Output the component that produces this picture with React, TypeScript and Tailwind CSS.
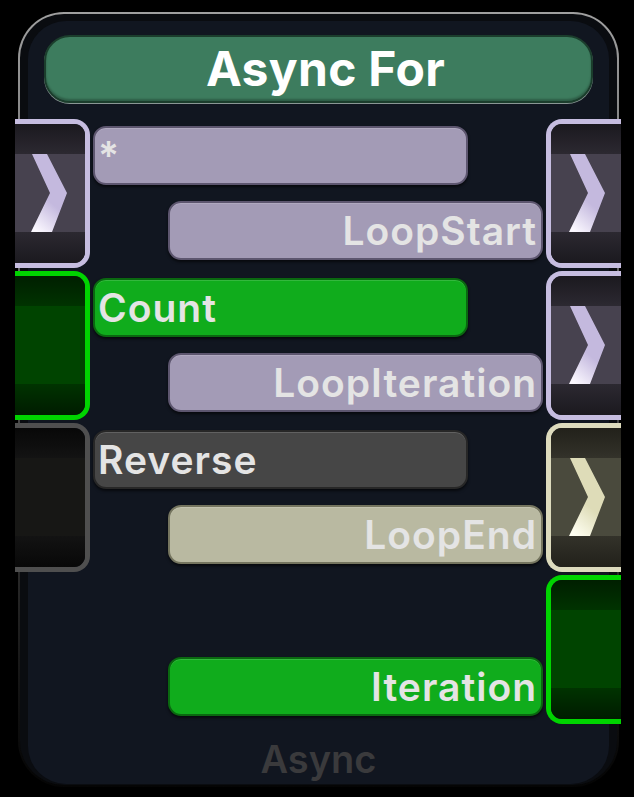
import React from "react";

type Tone = "lav" | "green" | "gray" | "beige";

const pinTone: Record<Tone, { border: string; top: string; mid: string; bottom: string }> = {
  lav: {
    border: "border-[#c6bde0]",
    top: "bg-gradient-to-b from-[#1b191f] to-[#2c2931]",
    mid: "bg-[#47424f]",
    bottom: "bg-gradient-to-b from-[#2c2931] to-[#1b191f]",
  },
  green: {
    border: "border-[#00d400]",
    top: "bg-gradient-to-b from-[#001f00] to-[#003300]",
    mid: "bg-[#004400]",
    bottom: "bg-gradient-to-b from-[#003300] to-[#001c00]",
  },
  gray: {
    border: "border-[#4f4f4f]",
    top: "bg-gradient-to-b from-[#080808] to-[#131313]",
    mid: "bg-[#171715]",
    bottom: "bg-gradient-to-b from-[#131313] to-[#080808]",
  },
  beige: {
    border: "border-[#dddbbd]",
    top: "bg-gradient-to-b from-[#22211a] to-[#33322a]",
    mid: "bg-[#4a4a3d]",
    bottom: "bg-gradient-to-b from-[#33322a] to-[#22211a]",
  },
};

const fieldTone: Record<Tone, string> = {
  lav: "bg-[#a39bb6] border-[#5d566f]",
  green: "bg-[#10ac1c] border-[#0a6810]",
  gray: "bg-[#464646] border-[#272727]",
  beige: "bg-[#b9b9a1] border-[#75755f]",
};

const Chevron = ({ tone }: { tone: "lav" | "beige" }) => {
  const id = `chev-${tone}`;
  const from = tone === "lav" ? "#c4b9de" : "#dedcb8";
  const to = tone === "lav" ? "#fbf8ff" : "#fffff2";
  return (
    <svg width="37" height="78" viewBox="0 0 37 78">
      <defs>
        <linearGradient id={id} x1="0.6" y1="0" x2="0.2" y2="1">
          <stop offset="0" stopColor={from} />
          <stop offset="0.55" stopColor={from} />
          <stop offset="1" stopColor={to} />
        </linearGradient>
      </defs>
      <polygon points="1,0 16,0 36,39 21,78 0,78 19,39" fill={`url(#${id})`} />
    </svg>
  );
};

const Pin = ({ tone, side, exec }: { tone: Tone; side: "left" | "right"; exec?: boolean }) => {
  const t = pinTone[tone];
  return (
    <div
      className={`w-[75px] h-[149px] shrink-0 border-[5px] overflow-hidden flex flex-col ${t.border} ${
        side === "left" ? "border-l-0 rounded-r-[16px]" : "border-r-0 rounded-l-[16px]"
      }`}
    >
      <div className={`h-[30px] ${t.top}`} />
      <div className={`h-[78px] flex items-center ${t.mid} ${side === "left" ? "pl-[16px]" : "pl-[18px]"}`}>
        {exec && <Chevron tone={tone === "beige" ? "beige" : "lav"} />}
      </div>
      <div className={`flex-1 ${t.bottom}`} />
    </div>
  );
};

const Field = ({ label, tone, align }: { label: string; tone: Tone; align: "left" | "right" }) => (
  <div
    className={`h-[59px] w-[375px] rounded-[13px] border-2 flex items-center shadow-[0_2px_3px_rgba(0,0,0,0.6),inset_0_1px_0_rgba(255,255,255,0.15)] ${fieldTone[tone]} ${
      align === "left" ? "justify-start pl-[3px]" : "justify-end pr-[4px]"
    }`}
  >
    <span className="text-[39px] leading-none font-semibold text-[#e4e4e4] tracking-[1px] whitespace-nowrap">
      {label}
    </span>
  </div>
);

type Row = {
  left?: { tone: Tone; exec?: boolean };
  input?: { label: string; tone: Tone };
  output: { label: string; tone: Tone };
  right: { tone: Tone; exec?: boolean };
};

const rows: Row[] = [
  { left: { tone: "lav", exec: true }, input: { label: "*", tone: "lav" }, output: { label: "LoopStart", tone: "lav" }, right: { tone: "lav", exec: true } },
  { left: { tone: "green" }, input: { label: "Count", tone: "green" }, output: { label: "LoopIteration", tone: "lav" }, right: { tone: "lav", exec: true } },
  { left: { tone: "gray" }, input: { label: "Reverse", tone: "gray" }, output: { label: "LoopEnd", tone: "beige" }, right: { tone: "beige", exec: true } },
  { output: { label: "Iteration", tone: "green" }, right: { tone: "green" } },
];

export default function App() {
  return (
    <div
      className="w-[634px] h-[797px] bg-black overflow-hidden pt-[12px] pl-[18px]"
      style={{ fontFamily: "Inter, 'Noto Sans', sans-serif" }}
    >
      <div className="w-[601px] h-[775px] rounded-[46px] p-[2px] bg-gradient-to-b from-[#a0a0a0] via-[#4a4a4a] to-[#050505]">
        <div className="h-full rounded-[44px] bg-[#0a0c10] px-[8px] pt-[7px] pb-[1px]">
          <div className="h-full rounded-[38px] bg-[#111620] flex flex-col">
            <div className="mt-[14px] mx-[16px] h-[68px] rounded-[26px] bg-[#3d7c5e] border-2 border-[#1b3d2c] shadow-[0_1px_0_rgba(190,205,198,0.7),inset_0_-2px_2px_rgba(0,0,0,0.25)] flex items-center justify-center pl-[14px]">
              <span className="text-[48px] leading-none font-bold text-white tracking-[0.3px]">Async For</span>
            </div>

            <div className="mt-[16px] ml-[-13px] mr-[-12px] flex flex-col gap-[3px]">
              {rows.map((r, i) => (
                <div key={i} className="flex">
                  {r.left ? <Pin tone={r.left.tone} side="left" exec={r.left.exec} /> : <div className="w-[75px] shrink-0" />}
                  <div className="flex-1 flex flex-col pt-[7px] gap-[16px]">
                    {r.input ? (
                      <div className="ml-[3px]">
                        <Field label={r.input.label} tone={r.input.tone} align="left" />
                      </div>
                    ) : (
                      <div className="h-[59px]" />
                    )}
                    <div className="ml-[78px]">
                      <Field label={r.output.label} tone={r.output.tone} align="right" />
                    </div>
                  </div>
                  <Pin tone={r.right.tone} side="right" exec={r.right.exec} />
                </div>
              ))}
            </div>

            <div className="mt-[16px] text-center text-[38px] leading-none font-semibold text-[#3a3a3c]">Async</div>
          </div>
        </div>
      </div>
    </div>
  );
}
